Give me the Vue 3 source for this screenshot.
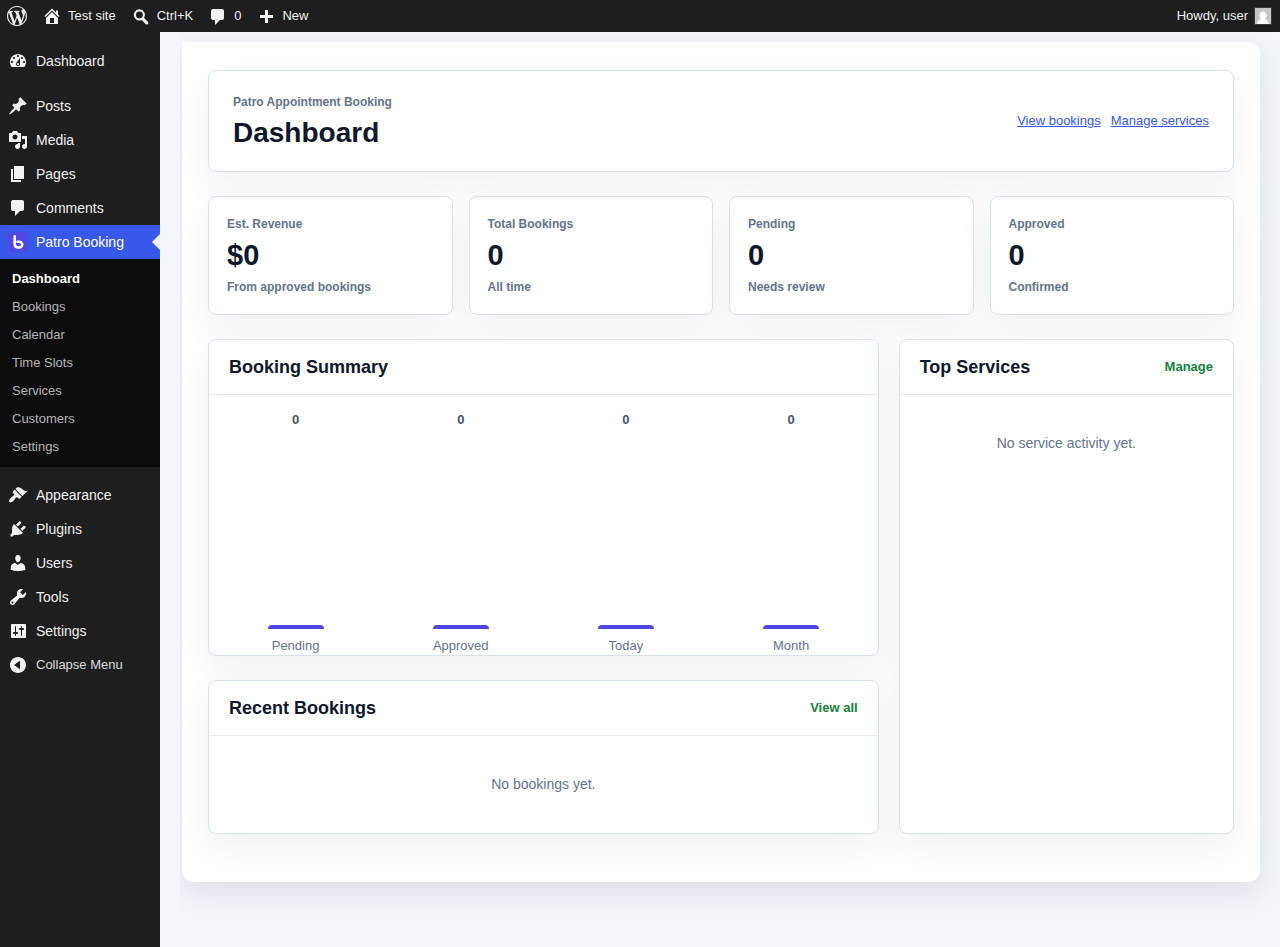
<script setup>
const icons = {
  wordpress: 'M20 10c0-5.51-4.49-10-10-10C4.48 0 0 4.49 0 10c0 5.52 4.48 10 10 10 5.51 0 10-4.48 10-10zM7.78 15.37L4.37 6.22c.55-.02 1.17-.08 1.17-.08.5-.06.44-1.13-.06-1.11 0 0-1.45.11-2.37.11-.18 0-.37 0-.58-.01C4.12 2.69 6.87 1.11 10 1.11c2.33 0 4.45.87 6.05 2.34-.68-.11-1.65.39-1.65 1.58 0 .74.45 1.36.9 2.1.35.61.55 1.36.55 2.46 0 1.49-1.4 5-1.4 5l-3.03-8.37c.54-.02.82-.17.82-.17.5-.05.44-1.25-.06-1.22 0 0-1.44.12-2.38.12-.87 0-2.33-.12-2.33-.12-.5-.03-.56 1.2-.06 1.22l.92.08 1.26 3.41zM17.41 10c.24-.64.74-1.87.43-4.25.7 1.29 1.05 2.71 1.05 4.25 0 3.29-1.73 6.24-4.4 7.78.97-2.59 1.94-5.2 2.92-7.78zM6.1 18.09C3.12 16.65 1.11 13.53 1.11 10c0-1.3.23-2.48.72-3.59C3.25 10.3 4.67 14.2 6.1 18.09zm4.03-6.63l2.58 6.98c-.86.29-1.76.45-2.71.45-.79 0-1.57-.11-2.29-.33.81-2.38 1.62-4.74 2.42-7.1z',
  home: 'M16 8.5l1.53 1.53-1.06 1.06L10 4.6l-6.47 6.49-1.06-1.06L10 2.5l4 4v-2h2v4zm-6-2.46l6 5.99V18H4v-5.97zM12 17v-5H8v5h4z',
  search: 'M8.400 3.300a5.600 5.600 0 0 1 4.700 8.600l3.800 3.800a1.600 1.600 0 0 1-2.300 2.300l-3.900-4a5.600 5.600 0 1 1-2.300-10.700zM8.400 5.500a3.400 3.400 0 1 0 0 6.800 3.400 3.400 0 0 0 0-6.800z',
  barComments: 'M5 3h9c1.100 0 2 .9 2 2v7c0 1.100-.9 2-2 2h-2l-5 5v-5H5c-1.100 0-2-.9-2-2V5c0-1.100.9-2 2-2z',
  plus: 'M17 9v3h-5v5H9v-5H4V9h5V4h3v5h5z',
  dashboard: 'M3.76 16h12.48c1.1-1.37 1.76-3.11 1.76-5 0-4.42-3.58-8-8-8s-8 3.58-8 8c0 1.89.66 3.63 1.76 5zM10 4c.55 0 1 .45 1 1s-.45 1-1 1-1-.45-1-1 .45-1 1-1zM6 6c.55 0 1 .45 1 1s-.45 1-1 1-1-.45-1-1 .45-1 1-1zm8 0c.55 0 1 .45 1 1s-.45 1-1 1-1-.45-1-1 .45-1 1-1zm-5.37 5.55L12 7v6c0 1.1-.9 2-2 2s-2-.9-2-2c0-.57.24-1.08.63-1.45zM4 10c.55 0 1 .45 1 1s-.45 1-1 1-1-.45-1-1 .45-1 1-1zm12 0c.55 0 1 .45 1 1s-.45 1-1 1-1-.45-1-1 .45-1 1-1zm-5 3c0-.55-.45-1-1-1s-1 .45-1 1 .45 1 1 1 1-.45 1-1z',
  post: 'M10.44 3.02l1.82-1.82 6.36 6.35-1.83 1.82c-1.05-.68-2.48-.57-3.41.36l-.75.75c-.92.93-1.04 2.35-.35 3.41l-1.83 1.82-2.41-2.41-2.8 2.79c-.42.42-3.38 2.71-3.8 2.29s1.86-3.39 2.28-3.81l2.79-2.79L4.1 9.36l1.83-1.82c1.05.69 2.48.57 3.4-.36l.75-.75c.93-.92 1.05-2.35.36-3.41z',
  media: 'M13 11V4c0-.55-.45-1-1-1h-1.67L9 1H5L3.67 3H2c-.55 0-1 .45-1 1v7c0 .55.45 1 1 1h10c.55 0 1-.45 1-1zM7 4.5c1.38 0 2.5 1.12 2.5 2.5S8.38 9.5 7 9.5 4.5 8.38 4.5 7 5.62 4.5 7 4.5zM14 6h5v10.5c0 1.38-1.12 2.5-2.5 2.5S14 17.88 14 16.5s1.12-2.5 2.5-2.5c.17 0 .34.02.5.05V9h-3V6zm-4 8.05V13h2v3.5c0 1.38-1.12 2.5-2.5 2.5S7 17.88 7 16.5 8.12 14 9.5 14c.17 0 .34.02.5.05z',
  page: 'M6 15V2h10v13H6zm-1 1h8v2H3V5h2v11z',
  comments: 'M5 2h9c1.1 0 2 .9 2 2v7c0 1.1-.9 2-2 2h-2l-5 5v-5H5c-1.1 0-2-.9-2-2V4c0-1.1.9-2 2-2z',
  appearance: 'M14.48 11.06L7.41 3.99l1.5-1.5c.5-.56 2.3-.47 3.51.32 1.21.8 1.43 1.28 2.91 2.1 1.18.64 2.45 1.26 4.45.85zm-.71.71L6.7 4.7 4.93 6.47c-.39.39-.39 1.02 0 1.41l1.06 1.06c.39.39.39 1.03 0 1.42-.6.6-1.43 1.11-2.21 1.69-.35.26-.7.53-1.01.84C1.43 14.23.4 16.08 1.4 17.07c.99 1 2.84-.03 4.18-1.36.31-.31.58-.66.85-1.02.57-.78 1.08-1.61 1.69-2.21.39-.39 1.02-.39 1.41 0l1.06 1.06c.39.39 1.02.39 1.41 0z',
  plugins: 'M13.11 4.36L9.87 7.6 8 5.73l3.24-3.24c.35-.34 1.05-.2 1.56.32.52.51.66 1.21.31 1.55zm-8 1.77l.91-1.12 9.01 9.01-1.19.84c-.71.71-2.63 1.16-3.82 1.16H6.14L4.9 17.26c-.59.59-1.54.59-2.12 0-.59-.58-.59-1.53 0-2.12l1.24-1.24v-3.88c0-1.13.4-3.19 1.09-3.89zm7.26 3.97l3.24-3.24c.34-.35 1.04-.21 1.55.31.52.51.66 1.21.31 1.55l-3.24 3.25z',
  users: 'M10 9.25c-2.27 0-2.73-3.44-2.73-3.44C7 4.02 7.82 2 9.97 2c2.16 0 2.98 2.02 2.71 3.81 0 0-.41 3.44-2.68 3.44zm0 2.57L12.72 10c2.39 0 4.52 2.33 4.52 4.53v2.49s-3.65 1.13-7.24 1.13c-3.65 0-7.24-1.13-7.24-1.13v-2.49c0-2.25 1.94-4.48 4.47-4.48z',
  tools: 'M16.68 9.77c-1.34 1.34-3.3 1.67-4.95.99l-5.41 6.52c-.99.99-2.59.99-3.58 0s-.99-2.59 0-3.57l6.52-5.42c-.68-1.65-.35-3.61.99-4.95 1.28-1.28 3.12-1.62 4.72-1.06l-2.89 2.89 2.82 2.82 2.86-2.87c.53 1.58.18 3.39-1.08 4.65zM3.81 16.21c.4.39 1.04.39 1.43 0 .4-.4.4-1.04 0-1.43-.39-.4-1.03-.4-1.43 0-.39.39-.39 1.03 0 1.43z',
  settings: 'M18 16V4c0-.55-.45-1-1-1H4c-.55 0-1 .45-1 1v12c0 .55.45 1 1 1h13c.55 0 1-.45 1-1zM8 11h1c.55 0 1 .45 1 1s-.45 1-1 1H8v1.5c0 .28-.22.5-.5.5s-.5-.22-.5-.5V13H6c-.55 0-1-.45-1-1s.45-1 1-1h1V5.5c0-.28.22-.5.5-.5s.5.22.5.5V11zm5-2h-1c-.55 0-1-.45-1-1s.45-1 1-1h1V5.5c0-.28.22-.5.5-.5s.5.22.5.5V7h1c.55 0 1 .45 1 1s-.45 1-1 1h-1v5.5c0 .28-.22.5-.5.5s-.5-.22-.5-.5V9z',
  collapse: 'M10 2c4.42 0 8 3.58 8 8s-3.58 8-8 8-8-3.58-8-8 3.58-8 8-8zM12 14.2V5.800l-6 4.200z',
}

const barItems = [
  { icon: 'home', label: 'Test site' },
  { icon: 'search', label: 'Ctrl+K' },
  { icon: 'barComments', label: '0' },
  { icon: 'plus', label: 'New' },
]

const menuGroups = [
  [{ icon: 'dashboard', label: 'Dashboard' }],
  [
    { icon: 'post', label: 'Posts' },
    { icon: 'media', label: 'Media' },
    { icon: 'page', label: 'Pages' },
    { icon: 'comments', label: 'Comments' },
    {
      label: 'Patro Booking',
      children: ['Dashboard', 'Bookings', 'Calendar', 'Time Slots', 'Services', 'Customers', 'Settings'],
    },
  ],
  [
    { icon: 'appearance', label: 'Appearance' },
    { icon: 'plugins', label: 'Plugins' },
    { icon: 'users', label: 'Users' },
    { icon: 'tools', label: 'Tools' },
    { icon: 'settings', label: 'Settings' },
  ],
]

const stats = [
  { label: 'Est. Revenue', value: '$0', note: 'From approved bookings' },
  { label: 'Total Bookings', value: '0', note: 'All time' },
  { label: 'Pending', value: '0', note: 'Needs review' },
  { label: 'Approved', value: '0', note: 'Confirmed' },
]

const bars = [
  { label: 'Pending', value: 0 },
  { label: 'Approved', value: 0 },
  { label: 'Today', value: 0 },
  { label: 'Month', value: 0 },
]
</script>

<template>
  <div class="admin">
    <header class="topbar">
      <a href="#" class="bar-item" aria-label="About WordPress">
        <svg class="icon" viewBox="0 0 20 20"><path :d="icons.wordpress" /></svg>
      </a>
      <a v-for="item in barItems" :key="item.label" href="#" class="bar-item">
        <svg class="icon" viewBox="0 0 20 20"><path fill-rule="evenodd" :d="icons[item.icon]" /></svg>
        <span>{{ item.label }}</span>
      </a>
      <a href="#" class="bar-item account">
        <span>Howdy, user</span>
        <svg class="avatar" viewBox="0 0 16 16">
          <rect width="16" height="16" fill="#c5c5c5" />
          <path fill="#fff" d="M8 3.400c2 0 3.500 1.700 3.500 3.800 0 1.500-.6 2.700-1.500 3.400v.5c1.700.5 3.500 1.600 4 4.900H2c.5-3.300 2.300-4.400 4-4.900v-.5C5.100 9.900 4.500 8.700 4.500 7.200c0-2.100 1.500-3.800 3.500-3.800z" />
        </svg>
      </a>
    </header>

    <div class="body">
      <nav class="sidebar" aria-label="Main menu">
        <ul v-for="(group, g) in menuGroups" :key="g" class="menu">
          <li v-for="item in group" :key="item.label">
            <a href="#" class="menu-item" :class="{ active: item.children }">
              <svg v-if="item.icon" class="icon" viewBox="0 0 20 20"><path :d="icons[item.icon]" /></svg>
              <svg v-else class="icon brand" viewBox="0 0 20 20">
                <rect x="-.5" y="-.5" width="21" height="21" rx="5" fill="#5347d8" opacity=".6" />
                <rect x=".6" y=".6" width="18.800" height="18.800" rx="4" fill="#4f46e5" />
                <path d="M6.700 4.300v8a3.600 3.600 0 0 0 3.600 3.200h1a2.900 2.900 0 0 0 0-5.800H9.500" fill="none" stroke="#fff" stroke-width="2.600" stroke-linecap="round" stroke-linejoin="round" />
              </svg>
              <span>{{ item.label }}</span>
            </a>
            <ul v-if="item.children" class="submenu">
              <li v-for="(child, i) in item.children" :key="child">
                <a href="#" class="submenu-item" :class="{ current: i === 0 }">{{ child }}</a>
              </li>
            </ul>
          </li>
        </ul>
        <button type="button" class="menu-item collapse">
          <svg class="icon" viewBox="0 0 20 20"><path fill-rule="evenodd" :d="icons.collapse" /></svg>
          <span>Collapse Menu</span>
        </button>
      </nav>

      <main class="content">
        <div class="panel">
          <section class="card hero">
            <div>
              <p class="caption">Patro Appointment Booking</p>
              <h1>Dashboard</h1>
            </div>
            <div class="hero-links">
              <a href="#">View bookings</a>
              <a href="#">Manage services</a>
            </div>
          </section>

          <section class="stats">
            <article v-for="stat in stats" :key="stat.label" class="card stat">
              <p class="caption">{{ stat.label }}</p>
              <p class="value">{{ stat.value }}</p>
              <p class="caption">{{ stat.note }}</p>
            </article>
          </section>

          <div class="grid">
            <div class="column">
              <section class="card">
                <div class="card-head"><h2>Booking Summary</h2></div>
                <div class="chart">
                  <div v-for="bar in bars" :key="bar.label" class="chart-col">
                    <strong>{{ bar.value }}</strong>
                    <div class="track"><div class="bar" :style="{ height: bar.value + '%' }"></div></div>
                    <span>{{ bar.label }}</span>
                  </div>
                </div>
              </section>
              <section class="card">
                <div class="card-head">
                  <h2>Recent Bookings</h2>
                  <a href="#">View all</a>
                </div>
                <p class="empty">No bookings yet.</p>
              </section>
            </div>
            <section class="card">
              <div class="card-head">
                <h2>Top Services</h2>
                <a href="#">Manage</a>
              </div>
              <p class="empty">No service activity yet.</p>
            </section>
          </div>
        </div>
      </main>
    </div>
  </div>
</template>

<style>
body {
  margin: 0;
  background: #f3f6fb;
}
</style>

<style scoped>
.admin {
  display: flex;
  flex-direction: column;
  min-height: 100vh;
  font: 13px/18px "Liberation Sans", Arial, sans-serif;
  color: #0f172a;
}
.admin * {
  box-sizing: border-box;
}
h1, h2, p, ul {
  margin: 0;
  padding: 0;
}
ul {
  list-style: none;
}
.icon {
  width: 20px;
  height: 20px;
  flex: none;
  fill: #f3f1f1;
}
.brand {
  overflow: visible;
}

.topbar {
  display: flex;
  align-items: center;
  gap: 15px;
  height: 32px;
  padding: 0 8px 0 7px;
  background: #1e1e1e;
}
.bar-item {
  display: flex;
  align-items: center;
  gap: 6px;
  color: #f0f0f1;
  text-decoration: none;
}
.account {
  margin-left: auto;
}
.avatar {
  width: 18px;
  height: 18px;
  border: 1px solid #3a3a3a;
}

.body {
  display: flex;
  flex: 1;
}
.sidebar {
  flex: none;
  width: 160px;
  padding-top: 12px;
  background: #1e1e1e;
}
.menu + .menu {
  margin-top: 11px;
}
.menu-item {
  position: relative;
  display: flex;
  align-items: center;
  gap: 8px;
  width: 100%;
  height: 34px;
  padding: 0 8px;
  font-size: 14px;
  color: #f0f0f1;
  text-decoration: none;
}
.menu-item.active {
  background: #3858e9;
  color: #fff;
}
.menu-item.active::after {
  content: "";
  position: absolute;
  top: 9px;
  right: 0;
  border: 8px solid transparent;
  border-left-width: 0;
  border-right-color: #f0f0f1;
}
.collapse {
  border: 0;
  background: none;
  font-family: inherit;
  font-size: 13px;
  line-height: 18px;
  text-align: left;
  color: #dcdcde;
}
.submenu {
  padding: 6px 0;
  background: #0c0c0c;
}
.submenu-item {
  display: block;
  padding: 5px 12px;
  color: #b4b4b4;
  text-decoration: none;
}
.submenu-item.current {
  font-weight: 700;
  color: #fff;
}

.content {
  flex: 1;
  min-width: 0;
  margin-left: 20px;
  padding: 10px 20px 64px 2px;
  overflow: hidden;
}
.panel {
  display: flex;
  flex-direction: column;
  gap: 24px;
  padding: 28px 26px 48px;
  border-radius: 0 12px 12px 12px;
  background: #fff;
  box-shadow: 0 10px 30px rgba(15, 23, 42, 0.1);
}
.card {
  border: 1px solid #d8e1ee;
  border-radius: 8px;
  background: #fff;
  box-shadow: 0 14px 38px rgba(0, 0, 0, 0.06);
}
.caption {
  font-size: 12px;
  font-weight: 700;
  color: #64748b;
}
.hero {
  display: flex;
  align-items: center;
  justify-content: space-between;
  padding: 22px 24px;
}
h1 {
  margin-top: 4px;
  padding-top: 2px;
  font-size: 28px;
  line-height: 32px;
}
.hero-links {
  display: flex;
  gap: 10px;
}
.hero-links a {
  color: #3858e9;
}
.stats {
  display: grid;
  grid-template-columns: repeat(4, 1fr);
  gap: 16px;
}
.stat {
  padding: 18px;
}
.value {
  margin: 6px 0;
  font-size: 29px;
  font-weight: 700;
  line-height: 33px;
}
.grid {
  display: grid;
  grid-template-columns: 2fr 1fr;
  gap: 20px;
}
.column {
  display: flex;
  flex-direction: column;
  gap: 24px;
}
.card-head {
  display: flex;
  align-items: center;
  justify-content: space-between;
  height: 55px;
  padding: 0 20px;
  border-bottom: 1px solid #e5e9f0;
}
h2 {
  font-size: 18px;
  line-height: 24px;
}
.card-head a {
  font-weight: 700;
  color: #15803d;
  text-decoration: none;
}
.chart {
  display: grid;
  grid-template-columns: repeat(4, 1fr);
  gap: 16px;
  height: 260px;
  padding: 16px 12px 0;
}
.chart-col {
  display: flex;
  flex-direction: column;
  align-items: center;
  gap: 8px;
  color: #64748b;
}
.chart-col strong {
  color: #475569;
}
.track {
  display: flex;
  flex: 1;
  align-items: flex-end;
  width: 56px;
}
.bar {
  width: 100%;
  min-height: 4px;
  border-radius: 6px 6px 0 0;
  background: #4f46e5;
}
.empty {
  padding: 38px 20px;
  font-size: 14px;
  line-height: 21px;
  text-align: center;
  color: #64748b;
}
</style>
